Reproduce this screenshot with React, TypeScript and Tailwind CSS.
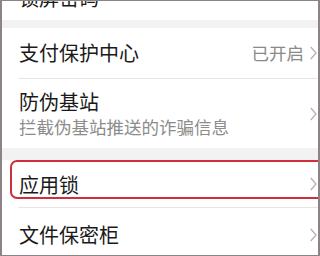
import React from "react";

const Chevron = () => (
  <svg width="7" height="14" viewBox="0 0 7 14" className="shrink-0">
    <polyline points="0.8,1 6,7 0.8,13" fill="none" stroke="#b3b3b3" strokeWidth="1.3" />
  </svg>
);

export default function App() {
  const font = { fontFamily: '"Noto Sans CJK SC", "Noto Sans", sans-serif' };
  return (
    <div
      className="w-[320px] h-[256px] overflow-hidden bg-white border-l-2 border-r-2 border-t border-b border-[#8b8387]"
      style={font}
    >
      <div className="flex flex-col">
        <div className="h-[44px] mt-[-25px] flex items-center pl-[17px] text-[20px] text-[#1a1a1a]">锁屏密码</div>
        <div className="h-[8px] bg-[#f2f2f2]" />
        <div className="h-[50px] flex items-center pl-[17px] pr-[1px]">
          <span className="flex-1 text-[20px] text-[#1a1a1a] leading-none">支付保护中心</span>
          <span className="text-[17.5px] text-[#8a8a8a] mr-[6px] leading-none">已开启</span>
          <Chevron />
        </div>
        <div className="h-px bg-[#e6e6e6] ml-[16px]" />
        <div className="h-[69px] flex items-center pl-[17px] pr-[1px]">
          <div className="flex-1 flex flex-col">
            <span className="text-[20px] text-[#1a1a1a] leading-[26px]">防伪基站</span>
            <span className="text-[17.5px] text-[#8c8c8c] leading-[24px]">拦截伪基站推送的诈骗信息</span>
          </div>
          <Chevron />
        </div>
        <div className="h-[12px] bg-[#f2f2f2]" />
        <div className="relative h-[47px] flex items-center pl-[17px] pr-[1px]">
          <span className="flex-1 text-[20px] text-[#1a1a1a] leading-none mt-[3px]">应用锁</span>
          <Chevron />
          <div className="absolute left-[8px] right-[-10px] top-0 h-[39px] rounded-[7px] border-2 border-[#cf2f3a]" />
        </div>
        <div className="h-px bg-[#e6e6e6] ml-[16px]" />
        <div className="h-[54px] flex items-center pl-[17px] pr-[1px]">
          <span className="flex-1 text-[20px] text-[#1a1a1a] leading-none">文件保密柜</span>
          <Chevron />
        </div>
      </div>
    </div>
  );
}
